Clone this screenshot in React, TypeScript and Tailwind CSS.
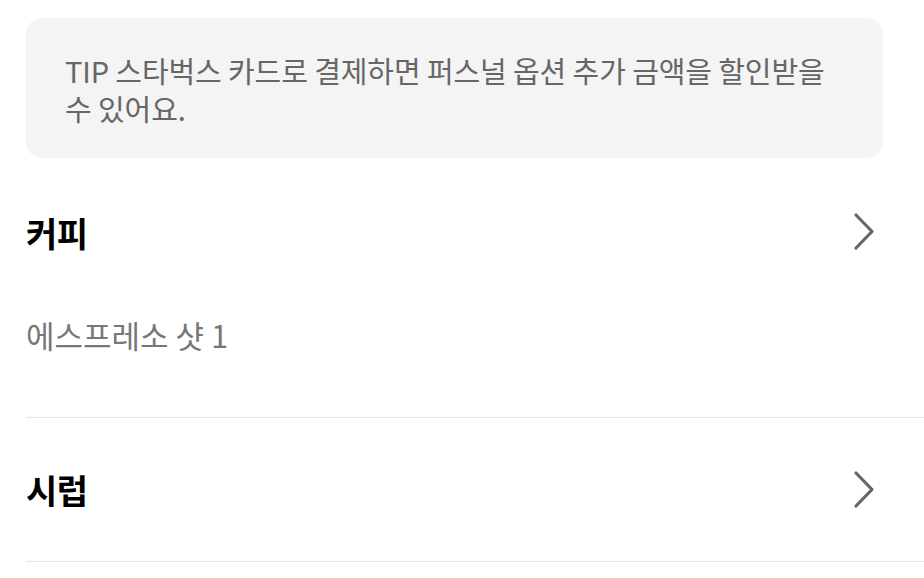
import React from "react";

function Chevron() {
  return (
    <svg width="24" height="40" viewBox="0 0 24 40" fill="none">
      <polyline points="4,3 20,19.5 4,36" stroke="#666666" strokeWidth="3.2" strokeLinecap="round" strokeLinejoin="round" />
    </svg>
  );
}

export default function App() {
  const font = { fontFamily: '"Noto Sans CJK KR", "Noto Sans", sans-serif' };
  return (
    <div className="w-[924px] h-[578px] bg-white overflow-hidden" style={font}>
      <div className="pt-[18px] pl-[26px] pr-[41px]">
        <div className="bg-[#f4f4f4] rounded-[16px] h-[140px] pl-[39px] pr-[30px] pt-[33px]">
          <p className="text-[29px] leading-[38px] text-[#666666] tracking-[-0.1px] break-keep">
            TIP 스타벅스 카드로 결제하면 퍼스널 옵션 추가 금액을 할인받을 수 있어요.
          </p>
        </div>
      </div>
      <div className="pl-[26px]">
        <div className="border-b border-[#e4e4e4] pb-[62px]">
          <div className="mt-[38px] h-[72px] flex items-center justify-between pr-[48px]">
            <span className="text-[34px] font-bold text-black tracking-[-0.5px]">커피</span>
            <Chevron />
          </div>
          <div className="mt-[47px] h-[40px] flex items-center">
            <span className="text-[31px] text-[#777777]">에스프레소 샷 1</span>
          </div>
        </div>
        <div className="h-[144px] border-b border-[#e4e4e4] flex items-center justify-between pr-[48px]">
          <span className="text-[34px] font-bold text-black tracking-[-0.5px]">시럽</span>
          <Chevron />
        </div>
      </div>
    </div>
  );
}
